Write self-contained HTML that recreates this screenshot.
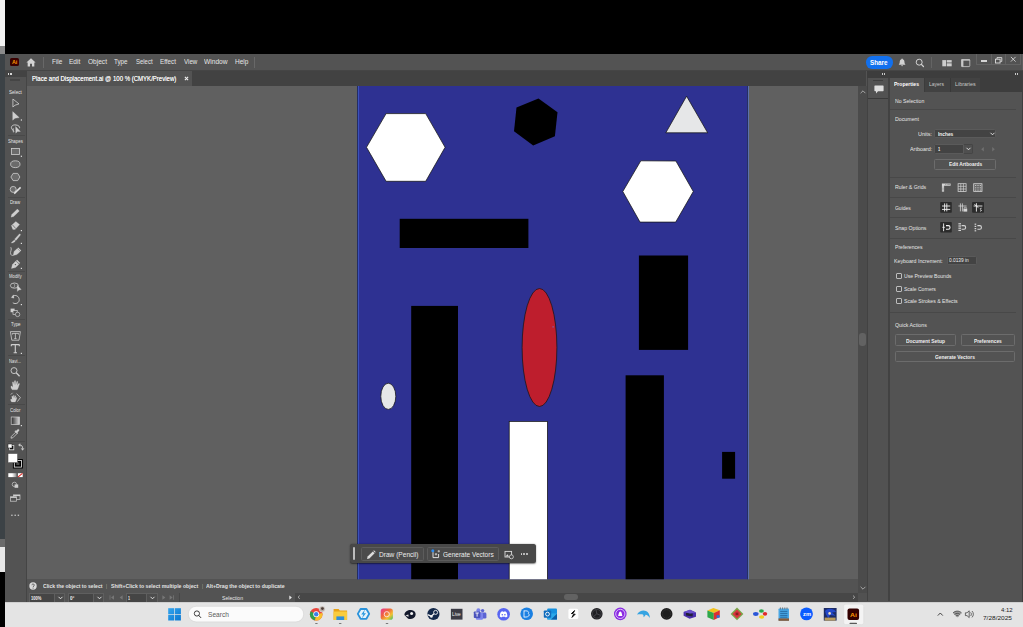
<!DOCTYPE html>
<html><head><meta charset="utf-8"><title>Illustrator</title>
<style>
html,body{margin:0;padding:0;background:#000;}
body{width:1023px;height:627px;overflow:hidden;position:relative;font-family:"Liberation Sans",sans-serif;}
#r{position:absolute;left:0;top:0;width:1023px;height:627px;overflow:hidden;background:#535353;}
#r div{position:absolute;box-sizing:border-box;}
#r span{position:absolute;white-space:nowrap;line-height:1;transform-origin:0 50%;}
#r svg{position:absolute;overflow:visible;}
</style></head><body><div id="r">
<div style="left:5px;top:0px;width:1018px;height:54.3px;background:#000;"></div>
<div style="left:0px;top:0px;width:4.6px;height:46px;background:#f3f3f3;"></div>
<div style="left:0px;top:46px;width:4.6px;height:8px;background:#8a8a8a;"></div>
<div style="left:0px;top:54px;width:4.6px;height:485px;background:#3c4246;"></div>
<div style="left:0px;top:539px;width:5px;height:7.5px;background:#6b6b6b;"></div>
<div style="left:0px;top:546.5px;width:5px;height:25.5px;background:#e8e8e8;"></div>
<div style="left:0px;top:572px;width:5px;height:55px;background:#000;"></div>
<div style="left:5px;top:54.3px;width:1018px;height:15.8px;background:#535353;"></div>
<div style="left:5px;top:70.1px;width:1018px;height:0.8px;background:#454545;"></div>
<div style="left:27px;top:70.8px;width:839px;height:15.4px;background:#424242;"></div>
<div style="left:27.2px;top:70.9px;width:164.6px;height:15.2px;background:#535353;"></div>
<div style="left:27px;top:86px;width:830.5px;height:493.3px;background:#606060;"></div>
<div style="left:4.6px;top:70.8px;width:22.7px;height:531px;background:#454545;"></div>
<div style="left:5.4px;top:70.8px;width:20.2px;height:531px;background:#535353;"></div>
<div style="left:4.6px;top:70.8px;width:22.7px;height:6.6px;background:#434343;"></div>
<div style="left:27.4px;top:579.2px;width:830px;height:14px;background:#535353;"></div>
<div style="left:27.4px;top:593px;width:830px;height:8.5px;background:#535353;"></div>
<div style="left:10px;top:57.8px;width:8.8px;height:8.3px;background:#3a0000;border-radius:1.6px"></div>
<span style="left:11.90px;top:59.78px;font-size:5.4px;font-weight:700;color:#ff9a00;transform:scaleX(1.0000);">Ai</span>
<svg style="left:25.6px;top:58.2px" width="10" height="9" viewBox="0 0 11 10"><path d="M5.5 0.3 L10.6 5 L9.2 5 L9.2 9.4 L6.6 9.4 L6.6 6.3 L4.4 6.3 L4.4 9.4 L1.8 9.4 L1.8 5 L0.4 5 Z" fill="#d4d4d4"/></svg>
<div style="left:43.1px;top:57px;width:0.8px;height:10.6px;background:#686868;"></div>
<div style="left:253.8px;top:57px;width:0.8px;height:10.6px;background:#686868;"></div>
<span style="left:51.70px;top:59.07px;font-size:6.9px;color:#e6e6e6;transform:scaleX(0.9264);">File</span>
<span style="left:69.30px;top:59.07px;font-size:6.9px;color:#e6e6e6;transform:scaleX(0.9504);">Edit</span>
<span style="left:88.00px;top:59.07px;font-size:6.9px;color:#e6e6e6;transform:scaleX(0.9528);">Object</span>
<span style="left:114.40px;top:59.07px;font-size:6.9px;color:#e6e6e6;transform:scaleX(0.9091);">Type</span>
<span style="left:135.80px;top:59.07px;font-size:6.9px;color:#e6e6e6;transform:scaleX(0.8656);">Select</span>
<span style="left:160.00px;top:59.07px;font-size:6.9px;color:#e6e6e6;transform:scaleX(0.9134);">Effect</span>
<span style="left:183.70px;top:59.07px;font-size:6.9px;color:#e6e6e6;transform:scaleX(0.8967);">View</span>
<span style="left:204.40px;top:59.07px;font-size:6.9px;color:#e6e6e6;transform:scaleX(0.9616);">Window</span>
<span style="left:235.40px;top:59.07px;font-size:6.9px;color:#e6e6e6;transform:scaleX(0.9442);">Help</span>
<span style="left:31.70px;top:75.79px;font-size:6.5px;color:#f4f4f4;transform:scaleX(0.9283);text-shadow:0 0 0.3px #f4f4f4;">Place and Displacement.ai @ 100 % (CMYK/Preview)</span>
<svg style="left:184px;top:76.4px" width="5" height="5" viewBox="0 0 5 5"><path d="M0.9 0.9 L4.1 4.1 M4.1 0.9 L0.9 4.1" stroke="#f0f0f0" stroke-width="1.1"/></svg>
<div style="left:8px;top:72.8px;width:1.4px;height:2.4px;background:#d8d8d8;"></div>
<div style="left:10.2px;top:72.8px;width:1.4px;height:2.4px;background:#d8d8d8;"></div>
<div style="left:9.9px;top:79.2px;width:10.2px;height:1.6px;background:#454545;"></div>
<svg style="left:0;top:0" width="1023" height="627" viewBox="0 0 1023 627"><defs><clipPath id="cv"><rect x="27.4" y="86" width="830.2" height="493.3"/></clipPath></defs><g clip-path="url(#cv)"><rect x="357.4" y="86" width="390" height="494" fill="#2e3192"/><rect x="357" y="86" width="0.9" height="494" fill="#1f2756"/><rect x="357.9" y="86" width="1.1" height="494" fill="#3a50bc"/><rect x="747" y="86" width="0.9" height="494" fill="#1c2358"/><rect x="747.9" y="86" width="1" height="494" fill="#5c74b6"/><polygon points="366.5,147.3 386.1,113.6 425.7,113.6 445.1,147.3 425.7,181.3 386.1,181.3" fill="#fff" stroke="#161616" stroke-width="0.75"/><polygon points="538.5,98.4 557.5,112.3 554.9,136.3 533.2,145.5 514,131.3 516.5,107.6" fill="#000"/><polygon points="686.6,96.2 707.7,132.8 665.8,132.8" fill="#e6e7e8" stroke="#161616" stroke-width="0.75"/><polygon points="622.8,191.5 640.8,160.8 675.9,161 693.3,191.5 675.7,222.1 640,222.1" fill="#fff" stroke="#161616" stroke-width="0.75"/><rect x="399.7" y="218.8" width="128.7" height="29.2" fill="#000"/><rect x="638.9" y="255.5" width="49.2" height="94.4" fill="#000"/><rect x="411.2" y="305.9" width="46.8" height="280" fill="#000"/><rect x="625.6" y="375.3" width="38.3" height="210" fill="#000"/><rect x="722.1" y="451.9" width="13" height="26.8" fill="#000"/><rect x="509.2" y="421.4" width="38.2" height="170" fill="#fff" stroke="#161616" stroke-width="0.75"/><ellipse cx="539.5" cy="347.5" rx="17.4" ry="59" fill="#be1e2d" stroke="#161616" stroke-width="0.75"/><rect x="552.6" y="326.4" width="1" height="1" fill="#5b8cff"/><ellipse cx="388.3" cy="396.3" rx="7.5" ry="13.1" fill="#e6e7e8" stroke="#161616" stroke-width="0.75"/></g></svg>
<div style="left:350px;top:544.2px;width:185.6px;height:19.2px;background:#484848;border-radius:2.5px;box-shadow:0 0.5px 1.5px rgba(0,0,0,.5)"></div>
<div style="left:353.2px;top:547.2px;width:1.4px;height:13.2px;background:#bdbdbd;border-radius:1px"></div>
<div style="left:360.6px;top:546.8px;width:63.6px;height:14px;background:#4b4b4b;border:0.8px solid #5c5c5c;border-radius:1.5px"></div>
<div style="left:426.7px;top:546.8px;width:72.7px;height:14px;background:#4b4b4b;border:0.8px solid #5c5c5c;border-radius:1.5px"></div>
<span style="left:379.20px;top:551.54px;font-size:6.6px;color:#ececec;transform:scaleX(0.9973);">Draw (Pencil)</span>
<span style="left:443.30px;top:551.54px;font-size:6.6px;color:#ececec;transform:scaleX(0.9871);">Generate Vectors</span>
<svg style="left:365.5px;top:549.5px" width="10" height="10" viewBox="0 0 10 10"><path d="M1 9 L1.6 6.6 L6.8 1.4 L8.6 3.2 L3.4 8.4 Z" fill="#dcdcdc"/><path d="M7.3 0.9 L7.9 0.3 L9.7 2.1 L9.1 2.7 Z" fill="#dcdcdc"/></svg>
<svg style="left:431px;top:549px" width="10" height="10" viewBox="0 0 10 10"><path d="M2 3.2 L2 8.6 L7.6 8.6 L7.6 5" fill="none" stroke="#dcdcdc" stroke-width="1"/><path d="M5 4 L5 6.4 M3.8 5.2 L6.2 5.2" stroke="#dcdcdc" stroke-width="0.8"/><circle cx="1.8" cy="1.8" r="1.5" fill="#2d8cf0"/><path d="M7.8 1 L7.8 3.4 M6.6 2.2 L9 2.2" stroke="#dcdcdc" stroke-width="0.7"/></svg>
<svg style="left:503.5px;top:549.5px" width="10" height="10" viewBox="0 0 10 10"><rect x="1" y="1.4" width="6.6" height="5.6" fill="none" stroke="#dcdcdc" stroke-width="0.9"/><path d="M1.6 6.4 L3.4 4.2 L5 6.4Z" fill="#dcdcdc"/><circle cx="7.4" cy="6.8" r="2" fill="#484848" stroke="#dcdcdc" stroke-width="0.8"/></svg>
<div style="left:520.6px;top:553.4px;width:1.5px;height:1.5px;background:#dcdcdc;border-radius:1px"></div>
<div style="left:523.3000000000001px;top:553.4px;width:1.5px;height:1.5px;background:#dcdcdc;border-radius:1px"></div>
<div style="left:526.0px;top:553.4px;width:1.5px;height:1.5px;background:#dcdcdc;border-radius:1px"></div>
<span style="left:9.00px;top:90.48px;font-size:5.4px;color:#e4e4e4;transform:scaleX(0.8528);">Select</span>
<span style="left:8.00px;top:138.68px;font-size:5.4px;color:#e4e4e4;transform:scaleX(0.8135);">Shapes</span>
<span style="left:10.30px;top:199.68px;font-size:5.4px;color:#e4e4e4;transform:scaleX(0.8015);">Draw</span>
<span style="left:9.00px;top:274.18px;font-size:5.4px;color:#e4e4e4;transform:scaleX(0.7922);">Modify</span>
<span style="left:10.60px;top:322.48px;font-size:5.4px;color:#e4e4e4;transform:scaleX(0.8200);">Type</span>
<span style="left:9.40px;top:358.68px;font-size:5.4px;color:#e4e4e4;transform:scaleX(0.7841);">Navi...</span>
<span style="left:10.20px;top:407.68px;font-size:5.4px;color:#e4e4e4;transform:scaleX(0.8059);">Color</span>
<div style="left:7.5px;top:134.8px;width:17px;height:0.7px;background:#494949;"></div>
<div style="left:7.5px;top:197.4px;width:17px;height:0.7px;background:#494949;"></div>
<div style="left:7.5px;top:271px;width:17px;height:0.7px;background:#494949;"></div>
<div style="left:7.5px;top:319px;width:17px;height:0.7px;background:#494949;"></div>
<div style="left:7.5px;top:355.3px;width:17px;height:0.7px;background:#494949;"></div>
<div style="left:7.5px;top:404px;width:17px;height:0.7px;background:#494949;"></div>
<div style="left:7.5px;top:441px;width:17px;height:0.7px;background:#494949;"></div>
<svg style="left:0;top:0" width="30" height="627" viewBox="0 0 30 627"><path d="M12.9 99 L12.9 107 L15 105.2 L19 103.9 Z" fill="none" stroke="#cfcfcf" stroke-width="0.8" stroke-linejoin="round"/><path d="M12.7 111.6 L12.7 120.2 L15 118.3 L19.2 117.6 Z" fill="#cfcfcf" stroke="#cfcfcf" stroke-width="0.3" /><rect x="20.799999999999997" y="119.4" width="1.2" height="1.2" fill="#e0e0e0"/><path d="M16 125 C12.5 124.4 10.8 126.6 11.6 128.6 C12.2 130 13.6 130.4 14 131.6 M16 125 C18.6 125.2 20 126.8 19.6 128.2" fill="none" stroke="#cfcfcf" stroke-width="0.9" /><path d="M13.2 128.2 L13.4 132.4" fill="none" stroke="#cfcfcf" stroke-width="0.8" /><path d="M15.6 126.6 L15.8 133.2 L17.4 131.6 L20.4 131.4 Z" fill="#cfcfcf" stroke="#cfcfcf" stroke-width="0.3" /><rect x="11.4" y="148.4" width="8.2" height="6.2" fill="#6b6b6b" stroke="#cfcfcf" stroke-width="0.8"/><rect x="20.799999999999997" y="155.70000000000002" width="1.2" height="1.2" fill="#e0e0e0"/><ellipse cx="15.3" cy="164.2" rx="4.7" ry="3.4" fill="#6b6b6b" stroke="#cfcfcf" stroke-width="0.8"/><path d="M10.9 177 L13.1 173.4 L17.7 173.4 L19.9 177 L17.7 180.6 L13.1 180.6 Z" fill="#6b6b6b" stroke="#cfcfcf" stroke-width="0.8" /><circle cx="13.2" cy="189.4" r="3" fill="#6b6b6b" stroke="#cfcfcf" stroke-width="0.8"/><path d="M14.2 193.6 L20.6 187.4" fill="none" stroke="#e0e0e0" stroke-width="1.5" /><path d="M11 217.2 L11.7 214.6 L17.4 208.9 L19.4 210.9 L13.7 216.6 Z" fill="#cfcfcf" stroke="#cfcfcf" stroke-width="0.2" /><path d="M17.9 208.3 L20 210.4" fill="none" stroke="#535353" stroke-width="0.6" /><path d="M11.3 225.6 L15.8 221.4 L19.6 224.6 L15.2 229.4 L12.8 229.4 Z" fill="#cfcfcf" stroke="#cfcfcf" stroke-width="0.2" /><path d="M12.4 224.8 L15.8 228.6" fill="none" stroke="#535353" stroke-width="0.7" /><rect x="20.799999999999997" y="230.0" width="1.2" height="1.2" fill="#e0e0e0"/><path d="M19.6 233.8 L20.6 234.8 L16 240.4 L14.6 239.2 Z" fill="#cfcfcf" stroke="#cfcfcf" stroke-width="0.3" /><path d="M14.6 239.9 L15.4 240.8 C14.6 242.8 12.6 243 11 243 C12.2 242.2 12.6 240.6 14.6 239.9 Z" fill="#cfcfcf" stroke="#cfcfcf" stroke-width="0.2" /><rect x="20.799999999999997" y="242.8" width="1.2" height="1.2" fill="#e0e0e0"/><path d="M14 251.6 L17.2 248.4 L20.2 251.4 L17 254.6 L13.2 255.6 Z" fill="#cfcfcf" stroke="#cfcfcf" stroke-width="0.2" /><path d="M17.8 247.8 L20.8 250.8" fill="none" stroke="#cfcfcf" stroke-width="1.2" /><path d="M10.8 247.2 C12.4 249.6 9.6 252 10.8 254.4 C11.4 255.6 12.6 255.6 13.4 255.2" fill="none" stroke="#cfcfcf" stroke-width="0.8" /><path d="M12.4 264.6 L15.8 261 L19 264.2 L15.6 267.6 L11.4 268.6 Z" fill="#cfcfcf" stroke="#cfcfcf" stroke-width="0.2" /><path d="M16.6 260.2 L19.8 263.4" fill="none" stroke="#cfcfcf" stroke-width="1.3" /><circle cx="15.4" cy="264.6" r="0.7" fill="#535353"/><rect x="20.799999999999997" y="267.79999999999995" width="1.2" height="1.2" fill="#e0e0e0"/><ellipse cx="14.4" cy="285.6" rx="4" ry="2.6" fill="none" stroke="#cfcfcf" stroke-width="0.8"/><path d="M13.6 283.4 C15 284.4 15 286.6 13.6 287.8" fill="none" stroke="#cfcfcf" stroke-width="0.6" /><path d="M17.2 285.2 L17.4 291.4 L18.9 289.9 L21.2 289.6 Z" fill="#cfcfcf" stroke="#cfcfcf" stroke-width="0.3" /><path d="M12.6 296.2 C15.4 294.4 19 296 19.2 299.6 C19.4 303 15.6 304.6 12.8 302.8" fill="none" stroke="#cfcfcf" stroke-width="0.9" /><path d="M11.2 297.6 L13.6 294.8 L14 298.2 Z" fill="#cfcfcf" stroke="#cfcfcf" stroke-width="0.2" /><rect x="20.799999999999997" y="304.0" width="1.2" height="1.2" fill="#e0e0e0"/><rect x="10.6" y="308.6" width="4" height="3.6" fill="#cfcfcf"/><rect x="13" y="310.6" width="4.2" height="3.8" fill="#535353" stroke="#cfcfcf" stroke-width="0.7"/><circle cx="17.6" cy="314.4" r="2.2" fill="#535353" stroke="#cfcfcf" stroke-width="0.7"/><path d="M10.4 331.6 L20.4 331.6 L19 340.2 L11.8 340.2 Z" fill="none" stroke="#cfcfcf" stroke-width="0.8" stroke-linejoin="round"/><path d="M12.4 333.4 L18.4 333.4 M15.4 333.4 L15.4 338.6 M12.4 333.2 L12.4 334.6 M18.4 333.2 L18.4 334.6 M14.2 338.6 L16.6 338.6" fill="none" stroke="#cfcfcf" stroke-width="0.8" /><path d="M11.2 344.6 L19.4 344.6 M15.3 344.6 L15.3 352.8 M11.3 344.4 L11.3 346.2 M19.3 344.4 L19.3 346.2 M13.6 352.8 L17 352.8" fill="none" stroke="#cfcfcf" stroke-width="1.1" /><rect x="20.799999999999997" y="352.79999999999995" width="1.2" height="1.2" fill="#e0e0e0"/><circle cx="14" cy="370.6" r="3" fill="none" stroke="#cfcfcf" stroke-width="0.9"/><path d="M16.2 372.8 L19.6 376.2" fill="none" stroke="#cfcfcf" stroke-width="1.3" /><path d="M12.2 389.8 C10.8 388 10.6 386.6 11.2 386 C11.8 385.6 12.6 386.6 13 387.2 L12.4 382.4 C12.4 381.6 13.4 381.6 13.6 382.4 L14.2 385 L14.4 381 C14.6 380.2 15.6 380.2 15.6 381 L15.8 385 L16.8 381.6 C17 381 18 381.2 17.8 382 L17.2 385.6 L18.6 383.6 C19 383 19.8 383.6 19.4 384.4 C18.6 386.2 18.4 388 17.2 389.8 Z" fill="#cfcfcf" stroke="#cfcfcf" stroke-width="0.2" /><path d="M11.6 402 C10.6 400.6 10.4 399.6 10.8 399.2 C11.4 398.8 12 399.6 12.2 400 L11.8 396.4 C11.8 395.8 12.6 395.8 12.8 396.4 L13.2 398.2 L13.4 395.6 C13.4 395 14.2 395 14.2 395.6 L14.4 398.2 L15 396 C15.2 395.4 16 395.6 15.8 396.2 L15.4 398.8 L16.2 397.6 C16.6 397.2 17.2 397.6 16.8 398.2 C16.2 399.6 16 400.8 15.2 402 Z" fill="#cfcfcf" stroke="#cfcfcf" stroke-width="0.2" /><path d="M16.6 393.6 L20.4 397.6 L17.4 401.6" fill="none" stroke="#cfcfcf" stroke-width="0.8" /><path d="M10.8 394.6 L12.6 392.8" fill="none" stroke="#cfcfcf" stroke-width="0.8" /><defs><linearGradient id="gg" x1="0" x2="1" y1="0" y2="0"><stop offset="0" stop-color="#2a2a2a"/><stop offset="1" stop-color="#d8d8d8"/></linearGradient><linearGradient id="wg" x1="0" x2="1"><stop offset="0" stop-color="#ffffff"/><stop offset="0.45" stop-color="#ffffff"/><stop offset="1" stop-color="#8a8a8a"/></linearGradient></defs><rect x="11.2" y="417" width="8.2" height="7.6" fill="url(#gg)" stroke="#cfcfcf" stroke-width="0.7"/><rect x="20.799999999999997" y="425.0" width="1.2" height="1.2" fill="#e0e0e0"/><path d="M11 438.2 L11.4 436.4 L15.6 432.2 L17 433.6 L12.8 437.8 Z" fill="none" stroke="#cfcfcf" stroke-width="0.8" /><path d="M16 431 L17.6 429.4 C18.6 428.6 19.8 429.8 19 430.8 L17.4 432.4 L18 433 L17.2 433.8 L14.6 431.2 L15.4 430.4 Z" fill="#cfcfcf" stroke="#cfcfcf" stroke-width="0.2" /><rect x="9.6" y="445.6" width="4.2" height="4.2" fill="#111" stroke="#e8e8e8" stroke-width="0.8"/><rect x="8" y="444" width="4" height="4" fill="#fff" stroke="#222" stroke-width="0.5"/><path d="M19.6 445 C22 445 22.6 446.4 22.6 448.6" fill="none" stroke="#cfcfcf" stroke-width="0.9" /><path d="M18.2 445 L20.2 443.4 L20.2 446.6 Z M22.6 450.4 L21 448.4 L24.2 448.4 Z" fill="#cfcfcf" stroke="#cfcfcf" stroke-width="0.2" /><rect x="12.9" y="459.1" width="10" height="9.4" fill="#000"/><rect x="14.3" y="460.5" width="7.2" height="6.6" fill="none" stroke="#f2f2f2" stroke-width="0.8"/><rect x="15.9" y="462" width="4" height="3.6" fill="#4a4a4a" stroke="#000" stroke-width="0.8"/><rect x="8" y="453.5" width="9.6" height="9.2" fill="#fff" stroke="#3a3a3a" stroke-width="0.5"/><rect x="8.3" y="473.2" width="8.3" height="3.9" fill="url(#wg)"/><rect x="17.9" y="473.2" width="4.8" height="3.9" fill="#fff"/><path d="M18.1 476.9 L22.5 473.4" fill="none" stroke="#e0201c" stroke-width="1.1" /><circle cx="14.4" cy="484.4" r="2.2" fill="none" stroke="#cfcfcf" stroke-width="0.7"/><rect x="14.6" y="484.4" width="3.6" height="3.4" fill="#cfcfcf"/><rect x="13.6" y="494.9" width="6.4" height="4.6" fill="#535353" stroke="#cfcfcf" stroke-width="0.7"/><rect x="13.6" y="494.9" width="6.4" height="1.2" fill="#cfcfcf"/><rect x="10.6" y="496.8" width="6" height="4.4" fill="#535353" stroke="#cfcfcf" stroke-width="0.7"/><rect x="10.6" y="496.8" width="6" height="1.1" fill="#cfcfcf"/><rect x="11.200000000000001" y="514.6" width="1.4" height="1.4" fill="#bdbdbd"/><rect x="14.5" y="514.6" width="1.4" height="1.4" fill="#bdbdbd"/><rect x="17.7" y="514.6" width="1.4" height="1.4" fill="#bdbdbd"/></svg>
<div style="left:866px;top:56.4px;width:26.6px;height:12.2px;background:#1270ee;border-radius:6.2px"></div>
<span style="left:870.40px;top:59.74px;font-size:6.6px;font-weight:700;color:#ffffff;transform:scaleX(0.9594);">Share</span>
<svg style="left:898.4px;top:58.3px" width="8.2" height="9" viewBox="0 0 10 11"><path d="M5 0.6 C5.5 0.6 5.8 1 5.8 1.5 C7.4 2 7.9 3.4 7.9 5 C7.9 6.6 8.4 7.2 9 7.8 L9 8.4 L1 8.4 L1 7.8 C1.6 7.2 2.1 6.6 2.1 5 C2.1 3.4 2.6 2 4.2 1.5 C4.2 1 4.5 0.6 5 0.6 Z" fill="#d2d2d2"/><path d="M3.9 9 L6.1 9 C6.1 10.4 3.9 10.4 3.9 9Z" fill="#d2d2d2"/></svg>
<svg style="left:914.8px;top:57.9px" width="10" height="10" viewBox="0 0 11 11"><circle cx="4.6" cy="4.6" r="3.3" fill="none" stroke="#d2d2d2" stroke-width="1.1"/><path d="M7 7 L9.3 9.3" stroke="#d2d2d2" stroke-width="1.4" stroke-linecap="round"/></svg>
<div style="left:930.9px;top:57.4px;width:0.8px;height:10.4px;background:#646464;"></div>
<svg style="left:941.8px;top:59.6px" width="11" height="7" viewBox="0 0 11 7"><rect x="0.3" y="0.1" width="3.7" height="6.2" fill="#cdcdcd"/><rect x="4.7" y="0.1" width="5" height="2.4" fill="#cdcdcd"/><rect x="4.7" y="3.3" width="5" height="3" fill="#cdcdcd"/></svg>
<svg style="left:960.8px;top:58.8px" width="10" height="9" viewBox="0 0 10 9"><rect x="0.6" y="0.6" width="8.2" height="7" rx="0.8" fill="none" stroke="#c8c8c8" stroke-width="0.8"/><rect x="0.4" y="0.4" width="8.6" height="1.2" fill="#c8c8c8"/><rect x="0.4" y="0.4" width="2" height="7.4" fill="#c8c8c8"/></svg>
<div style="left:976.4px;top:54.3px;width:44.2px;height:10.3px;background:#535353;border:0.7px solid #636363;border-top:none;border-radius:0 0 1.2px 1.2px"></div>
<div style="left:1022.2px;top:54.3px;width:0.8px;height:16px;background:#5e5e5e;"></div>
<div style="left:991.2px;top:54.3px;width:0.7px;height:10.2px;background:#636363;"></div>
<div style="left:1005.3px;top:54.3px;width:0.7px;height:10.2px;background:#636363;"></div>
<div style="left:981px;top:60.4px;width:5.5px;height:1.5px;background:#d4d4d4;"></div>
<svg style="left:994.8px;top:56.8px" width="8" height="7" viewBox="0 0 8 7"><rect x="0.5" y="2.2" width="4.6" height="3.8" fill="none" stroke="#dcdcdc" stroke-width="0.9"/><path d="M2 2 L2 0.6 L6.8 0.6 L6.8 4.4 L5.4 4.4" fill="none" stroke="#dcdcdc" stroke-width="0.9"/></svg>
<svg style="left:1010.3px;top:56.3px" width="7" height="7" viewBox="0 0 7 7"><path d="M0.9 0.9 L5.6 5.6 M5.6 0.9 L0.9 5.6" stroke="#d4d4d4" stroke-width="0.9"/></svg>
<div style="left:857.6px;top:86px;width:9px;height:515.5px;background:#4b4b4b;"></div>
<div style="left:857.6px;top:592.7px;width:9px;height:9px;background:#515151;"></div>
<div style="left:866.6px;top:70.8px;width:156.4px;height:7.4px;background:#3d3d3d;"></div>
<div style="left:866.6px;top:78.2px;width:24px;height:523.3px;background:#424242;"></div>
<div style="left:867.9px;top:78.2px;width:20.4px;height:523.3px;background:#525252;"></div>
<div style="left:867.8px;top:98.2px;width:20.6px;height:0.8px;background:#3a3a3a;"></div>
<div style="left:872.6px;top:80px;width:10.4px;height:0.9px;background:#3e3e3e;"></div>
<div style="left:890px;top:78.2px;width:133px;height:523.3px;background:#535353;"></div>
<div style="left:890px;top:78.2px;width:133px;height:13.4px;background:#3d3d3d;"></div>
<div style="left:890px;top:78.2px;width:34px;height:13.4px;background:#535353;"></div>
<div style="left:924.4px;top:78.2px;width:25.4px;height:13.4px;background:#424242;"></div>
<div style="left:950.4px;top:78.2px;width:29.8px;height:13.4px;background:#424242;"></div>
<div style="left:949.6px;top:78.2px;width:0.8px;height:13.4px;background:#383838;"></div>
<div style="left:923.9px;top:78.2px;width:0.6px;height:13.4px;background:#3c3c3c;"></div>
<div style="left:882px;top:72.9px;width:1px;height:2.1px;background:#c8c8c8;"></div>
<div style="left:884px;top:72.9px;width:1px;height:2.1px;background:#c8c8c8;"></div>
<div style="left:1015px;top:72.9px;width:1.3px;height:2.1px;background:#c8c8c8;"></div>
<div style="left:1017.1px;top:72.9px;width:1.3px;height:2.1px;background:#c8c8c8;"></div>
<div style="left:1022.1px;top:70.8px;width:0.9px;height:530.8px;background:#3e3e3e;"></div>
<svg style="left:873.6px;top:85.3px" width="10" height="9" viewBox="0 0 10 9"><path d="M1 0.4 L9 0.4 C9.4 0.4 9.6 0.6 9.6 1 L9.6 5.6 C9.6 6 9.4 6.2 9 6.2 L4 6.2 L2 8.4 L2 6.2 L1 6.2 C0.6 6.2 0.4 6 0.4 5.6 L0.4 1 C0.4 0.6 0.6 0.4 1 0.4Z" fill="#dedede"/></svg>
<svg style="left:859.8px;top:89.6px" width="6" height="4" viewBox="0 0 6 4"><path d="M0.6 3.2 L3 0.8 L5.4 3.2" fill="none" stroke="#bdbdbd" stroke-width="0.8"/></svg>
<svg style="left:859.6px;top:586.4px" width="6" height="4" viewBox="0 0 6 4"><path d="M0.6 0.8 L3 3.2 L5.4 0.8" fill="none" stroke="#bdbdbd" stroke-width="0.8"/></svg>
<div style="left:859.4px;top:333.2px;width:6.7px;height:12.7px;background:#626262;border-radius:3.2px"></div>
<span style="left:894.30px;top:81.97px;font-size:5.8px;font-weight:700;color:#ffffff;transform:scaleX(0.8714);">Properties</span>
<span style="left:929.10px;top:81.97px;font-size:5.8px;color:#c8c8c8;transform:scaleX(0.8559);">Layers</span>
<span style="left:954.90px;top:81.97px;font-size:5.8px;color:#c8c8c8;transform:scaleX(0.9261);">Libraries</span>
<span style="left:894.60px;top:98.51px;font-size:5.9px;color:#e6e6e6;transform:scaleX(0.8758);">No Selection</span>
<div style="left:890px;top:108.7px;width:126px;height:0.8px;background:#484848;"></div>
<div style="left:890px;top:177.2px;width:126px;height:0.8px;background:#484848;"></div>
<div style="left:890px;top:197px;width:126px;height:0.8px;background:#484848;"></div>
<div style="left:890px;top:217.1px;width:126px;height:0.8px;background:#484848;"></div>
<div style="left:890px;top:237.7px;width:126px;height:0.8px;background:#484848;"></div>
<div style="left:890px;top:312.3px;width:126px;height:0.8px;background:#484848;"></div>
<span style="left:894.60px;top:116.51px;font-size:5.9px;color:#e6e6e6;transform:scaleX(0.8925);">Document</span>
<span style="left:917.80px;top:131.71px;font-size:5.9px;color:#e6e6e6;transform:scaleX(0.9349);">Units:</span>
<div style="left:934.4px;top:128.8px;width:61.8px;height:9.6px;background:#434343;border:0.7px solid #5a5a5a;border-radius:1.2px"></div>
<span style="left:938.30px;top:131.88px;font-size:5.6px;font-weight:700;color:#f2f2f2;transform:scaleX(0.8624);">Inches</span>
<svg style="left:989.6px;top:132px" width="5" height="4" viewBox="0 0 5 4"><path d="M0.5 0.8 L2.5 2.8 L4.5 0.8" fill="none" stroke="#f0f0f0" stroke-width="0.9"/></svg>
<span style="left:909.70px;top:146.61px;font-size:5.9px;color:#e6e6e6;transform:scaleX(0.9147);">Artboard:</span>
<div style="left:934.4px;top:144.1px;width:38.3px;height:9.7px;background:#4f4f4f;border:0.7px solid #454545;border-radius:1.2px"></div>
<div style="left:934.4px;top:144.1px;width:30px;height:9.7px;background:#434343;border:0.7px solid #5a5a5a;border-radius:1.2px 0 0 1.2px"></div>
<span style="left:938.20px;top:146.78px;font-size:5.6px;font-weight:700;color:#f2f2f2;transform:scaleX(0.7064);">1</span>
<svg style="left:966px;top:147.3px" width="5" height="4" viewBox="0 0 5 4"><path d="M0.5 0.8 L2.5 2.8 L4.5 0.8" fill="none" stroke="#f0f0f0" stroke-width="0.9"/></svg>
<svg style="left:981px;top:147px" width="3" height="4.4" viewBox="0 0 3 4.4"><path d="M2.8 0 L0.2 2.2 L2.8 4.4Z" fill="#707070"/></svg>
<svg style="left:992px;top:147px" width="3" height="4.4" viewBox="0 0 3 4.4"><path d="M0.2 0 L2.8 2.2 L0.2 4.4Z" fill="#707070"/></svg>
<div style="left:934.4px;top:159.2px;width:61.4px;height:10.6px;background:#535353;border:0.7px solid #6c6c6c;border-radius:1.4px"></div>
<span style="left:948.50px;top:162.27px;font-size:5.8px;font-weight:700;color:#f0f0f0;transform:scaleX(0.8286);">Edit Artboards</span>
<span style="left:894.60px;top:185.41px;font-size:5.9px;color:#e6e6e6;transform:scaleX(0.8811);">Ruler &amp; Grids</span>
<span style="left:894.60px;top:205.51px;font-size:5.9px;color:#e6e6e6;transform:scaleX(0.8452);">Guides</span>
<span style="left:894.60px;top:225.61px;font-size:5.9px;color:#e6e6e6;transform:scaleX(0.8811);">Snap Options</span>
<span style="left:894.60px;top:244.81px;font-size:5.9px;color:#e6e6e6;transform:scaleX(0.8645);">Preferences</span>
<span style="left:894.00px;top:258.91px;font-size:5.9px;color:#e6e6e6;transform:scaleX(0.8928);">Keyboard Increment:</span>
<div style="left:946.6px;top:255.8px;width:30.8px;height:9.7px;background:#434343;border:0.7px solid #5a5a5a;border-radius:1.2px"></div>
<span style="left:948.90px;top:258.08px;font-size:5.4px;color:#f0f0f0;transform:scaleX(0.8911);">0.0139 in</span>
<div style="left:896.2px;top:272.7px;width:6.3px;height:6.3px;background:#4e4e4e;border:0.6px solid #bcbcbc;border-radius:1px"></div>
<span style="left:904.30px;top:273.57px;font-size:5.8px;color:#e6e6e6;transform:scaleX(0.8786);">Use Preview Bounds</span>
<div style="left:896.2px;top:285.7px;width:6.3px;height:6.3px;background:#4e4e4e;border:0.6px solid #bcbcbc;border-radius:1px"></div>
<span style="left:904.30px;top:286.57px;font-size:5.8px;color:#e6e6e6;transform:scaleX(0.8680);">Scale Corners</span>
<div style="left:896.2px;top:298.2px;width:6.3px;height:6.3px;background:#4e4e4e;border:0.6px solid #bcbcbc;border-radius:1px"></div>
<span style="left:904.30px;top:299.07px;font-size:5.8px;color:#e6e6e6;transform:scaleX(0.8876);">Scale Strokes &amp; Effects</span>
<span style="left:894.60px;top:322.81px;font-size:5.9px;color:#e6e6e6;transform:scaleX(0.8925);">Quick Actions</span>
<div style="left:894.6px;top:334.2px;width:61.4px;height:11.6px;background:#535353;border:0.7px solid #6c6c6c;border-radius:1.4px"></div>
<div style="left:961.3px;top:334.2px;width:53.6px;height:11.6px;background:#535353;border:0.7px solid #6c6c6c;border-radius:1.4px"></div>
<div style="left:894.6px;top:351.2px;width:120.3px;height:10.6px;background:#535353;border:0.7px solid #6c6c6c;border-radius:1.4px"></div>
<span style="left:906.00px;top:338.67px;font-size:5.8px;font-weight:700;color:#f0f0f0;transform:scaleX(0.8442);">Document Setup</span>
<span style="left:974.40px;top:338.67px;font-size:5.8px;font-weight:700;color:#f0f0f0;transform:scaleX(0.8370);">Preferences</span>
<span style="left:934.80px;top:355.07px;font-size:5.8px;font-weight:700;color:#f0f0f0;transform:scaleX(0.8362);">Generate Vectors</span>
<svg style="left:0;top:0" width="1023" height="627" viewBox="0 0 1023 627"><path d="M941.9 183.4 L950.6 183.4 L950.6 185.7 L944.1 185.7 L944.1 191.8 L941.9 191.8 Z" fill="#d4d4d4"/><rect x="945.6" y="183.9" width="0.5" height="1" fill="#535353"/><rect x="942.5" y="186.8" width="1" height="0.5" fill="#535353"/><rect x="946.9" y="183.9" width="0.5" height="1" fill="#535353"/><rect x="942.5" y="188.10000000000002" width="1" height="0.5" fill="#535353"/><rect x="948.2" y="183.9" width="0.5" height="1" fill="#535353"/><rect x="942.5" y="189.4" width="1" height="0.5" fill="#535353"/><rect x="949.5" y="183.9" width="0.5" height="1" fill="#535353"/><rect x="942.5" y="190.70000000000002" width="1" height="0.5" fill="#535353"/><rect x="958.1" y="183.7" width="8" height="7.9" fill="none" stroke="#d4d4d4" stroke-width="0.8"/><path d="M960.8 183.7 V191.6 M963.4 183.7 V191.6 M958.1 186.3 H966.1 M958.1 189 H966.1" stroke="#d4d4d4" stroke-width="0.7" fill="none"/><rect x="973.7" y="183.7" width="8.3" height="7.9" fill="#6a6a6a" stroke="#d4d4d4" stroke-width="0.8"/><rect x="975.2" y="185.0" width="1" height="1" fill="#d4d4d4"/><rect x="975.2" y="187.3" width="1" height="1" fill="#d4d4d4"/><rect x="975.2" y="189.6" width="1" height="1" fill="#d4d4d4"/><rect x="977.5" y="185.0" width="1" height="1" fill="#d4d4d4"/><rect x="977.5" y="187.3" width="1" height="1" fill="#d4d4d4"/><rect x="977.5" y="189.6" width="1" height="1" fill="#d4d4d4"/><rect x="979.8000000000001" y="185.0" width="1" height="1" fill="#d4d4d4"/><rect x="979.8000000000001" y="187.3" width="1" height="1" fill="#d4d4d4"/><rect x="979.8000000000001" y="189.6" width="1" height="1" fill="#d4d4d4"/><rect x="940.2" y="201.9" width="11.6" height="10.9" fill="#2b2b2b" rx="0.8"/><rect x="972.1" y="201.9" width="11.9" height="10.9" fill="#2b2b2b" rx="0.8"/><path d="M944.6 203.4 V211.4 M946.8 203.4 V211.4 M942 206 H950.2 M942 209.4 H950.2" stroke="#f2f2f2" stroke-width="0.9" fill="none"/><path d="M960.4 203.4 V211.4 M962.4 203.4 V211.4 M958.4 206 H966.6" stroke="#d4d4d4" stroke-width="0.8" fill="none"/><rect x="963.4" y="208.6" width="3.8" height="3" fill="#d4d4d4"/><path d="M964.2 208.6 V207.4 H966.4 V208.6" stroke="#d4d4d4" stroke-width="0.6" fill="none"/><path d="M976.4 203.2 V211.6 M973.6 206 H982.4 M974.4 204.4 L978.4 207.6" stroke="#f2f2f2" stroke-width="0.9" fill="none"/><path d="M981.6 208.2 C980.2 207.8 979.8 209.2 980.8 209.6 C981.8 210 981.6 211.4 980 211" stroke="#f2f2f2" stroke-width="0.8" fill="none"/><rect x="940.2" y="222" width="11.6" height="10.6" fill="#2b2b2b" rx="0.8"/><path d="M943.6 223.4 V231.2 M942.4 227.3 H944.8" stroke="#f2f2f2" stroke-width="0.9" fill="none"/><path d="M946 225.6 H948.4 C950.6 225.6 950.6 229.2 948.4 229.2 H946" stroke="#f2f2f2" stroke-width="1.1" fill="none"/><rect x="958.4" y="223.2" width="2.6" height="1.2" fill="#d4d4d4"/><rect x="974.6" y="223.6" width="1.6" height="1.2" fill="#d4d4d4"/><rect x="958.4" y="225.39999999999998" width="2.6" height="1.2" fill="#d4d4d4"/><rect x="974.6" y="225.79999999999998" width="1.6" height="1.2" fill="#d4d4d4"/><rect x="958.4" y="227.6" width="2.6" height="1.2" fill="#d4d4d4"/><rect x="974.6" y="228.0" width="1.6" height="1.2" fill="#d4d4d4"/><rect x="958.4" y="229.79999999999998" width="2.6" height="1.2" fill="#d4d4d4"/><rect x="974.6" y="230.2" width="1.6" height="1.2" fill="#d4d4d4"/><path d="M961.6 225.6 H964 C966.2 225.6 966.2 229.2 964 229.2 H961.6" stroke="#d4d4d4" stroke-width="1.1" fill="none"/><path d="M977.4 225.6 H979.8 C982 225.6 982 229.2 979.8 229.2 H977.4" stroke="#d4d4d4" stroke-width="1.1" fill="none"/></svg>
<svg style="left:29.2px;top:582px" width="8" height="8" viewBox="0 0 8 8"><circle cx="4" cy="4" r="3.7" fill="#d9d9d9"/><path d="M2.9 3.2 C2.9 1.6 5.3 1.6 5.3 3.1 C5.3 4 4.1 4.1 4.1 5.1" fill="none" stroke="#535353" stroke-width="0.9"/><rect x="3.6" y="5.7" width="0.9" height="0.9" fill="#535353"/></svg>
<span style="left:42.80px;top:582.66px;font-size:6px;font-weight:700;color:#e2e2e2;transform:scaleX(0.8443);">Click the object to select</span>
<span style="left:105.90px;top:582.56px;font-size:6px;color:#bdbdbd;transform:scaleX(0.5774);">|</span>
<span style="left:110.60px;top:582.66px;font-size:6px;font-weight:700;color:#e2e2e2;transform:scaleX(0.8608);">Shift+Click to select multiple object</span>
<span style="left:201.70px;top:582.56px;font-size:6px;color:#bdbdbd;transform:scaleX(0.5774);">|</span>
<span style="left:206.40px;top:582.66px;font-size:6px;font-weight:700;color:#e2e2e2;transform:scaleX(0.8684);">Alt+Drag the object to duplicate</span>
<div style="left:29.4px;top:593.2px;width:25.6px;height:8.6px;background:#454545;border:0.6px solid #5f5f5f;border-bottom:none"></div>
<div style="left:55px;top:593.2px;width:10.200000000000003px;height:8.6px;background:#4c4c4c;border:0.6px solid #5f5f5f;border-left:none;border-bottom:none"></div>
<svg style="left:57.7px;top:596.2px" width="5" height="4" viewBox="0 0 5 4"><path d="M0.5 0.8 L2.5 2.8 L4.5 0.8" fill="none" stroke="#ededed" stroke-width="0.9"/></svg>
<div style="left:68px;top:593.2px;width:25.799999999999997px;height:8.6px;background:#454545;border:0.6px solid #5f5f5f;border-bottom:none"></div>
<div style="left:93.8px;top:593.2px;width:10.200000000000003px;height:8.6px;background:#4c4c4c;border:0.6px solid #5f5f5f;border-left:none;border-bottom:none"></div>
<svg style="left:96.5px;top:596.2px" width="5" height="4" viewBox="0 0 5 4"><path d="M0.5 0.8 L2.5 2.8 L4.5 0.8" fill="none" stroke="#ededed" stroke-width="0.9"/></svg>
<div style="left:125.6px;top:593.2px;width:21.599999999999994px;height:8.6px;background:#454545;border:0.6px solid #5f5f5f;border-bottom:none"></div>
<div style="left:147.2px;top:593.2px;width:10.400000000000006px;height:8.6px;background:#4c4c4c;border:0.6px solid #5f5f5f;border-left:none;border-bottom:none"></div>
<svg style="left:150.0px;top:596.2px" width="5" height="4" viewBox="0 0 5 4"><path d="M0.5 0.8 L2.5 2.8 L4.5 0.8" fill="none" stroke="#ededed" stroke-width="0.9"/></svg>
<span style="left:31.40px;top:596.19px;font-size:5.2px;font-weight:700;color:#f0f0f0;transform:scaleX(0.7820);">100%</span>
<span style="left:69.80px;top:596.19px;font-size:5.2px;font-weight:700;color:#f0f0f0;transform:scaleX(0.8850);">0°</span>
<span style="left:127.80px;top:596.19px;font-size:5.2px;font-weight:700;color:#f0f0f0;transform:scaleX(0.6915);">1</span>
<svg style="left:108.6px;top:595.4px" width="60" height="5" viewBox="0 0 60 5"><rect x="0.6" y="0.3" width="0.8" height="4.4" fill="#767676"/><path d="M5 0.3 L2 2.5 L5 4.7Z" fill="#767676"/><path d="M13.6 0.3 L10.6 2.5 L13.6 4.7Z" fill="#767676"/><path d="M53.4 0.3 L56.4 2.5 L53.4 4.7Z" fill="#767676"/></svg>
<svg style="left:168.8px;top:595.4px" width="10" height="5" viewBox="0 0 10 5"><path d="M0.6 0.3 L3.6 2.5 L0.6 4.7Z" fill="#767676"/><rect x="4.2" y="0.3" width="0.8" height="4.4" fill="#767676"/></svg>
<div style="left:179.4px;top:593.4px;width:0.7px;height:8.2px;background:#474747;"></div>
<span style="left:221.70px;top:596.08px;font-size:5.4px;color:#e6e6e6;transform:scaleX(0.9498);">Selection</span>
<svg style="left:288.6px;top:595.4px" width="3.4" height="5.2" viewBox="0 0 4 6"><path d="M0.4 0.4 L3.4 3 L0.4 5.6Z" fill="#e6e6e6"/></svg>
<div style="left:294.6px;top:592.7px;width:563px;height:9px;background:#474747;"></div>
<svg style="left:297.4px;top:595px" width="4" height="5" viewBox="0 0 4 5"><path d="M2.8 0.6 L1 2.2 L2.8 3.8" fill="none" stroke="#bdbdbd" stroke-width="0.8"/></svg>
<svg style="left:851.8px;top:595px" width="4" height="5" viewBox="0 0 4 5"><path d="M1 0.6 L2.8 2.2 L1 3.8" fill="none" stroke="#bdbdbd" stroke-width="0.8"/></svg>
<div style="left:564.4px;top:593.6px;width:13.6px;height:6.8px;background:#626262;border-radius:3.4px"></div>
<div style="left:5px;top:601.6px;width:1018px;height:25.4px;background:#e4e4e4;"></div>
<div style="left:5px;top:601.6px;width:1018px;height:0.6px;background:#d0d0d0;"></div>
<svg style="left:0;top:0" width="1023" height="627" viewBox="0 0 1023 627"><defs><linearGradient id="wl" gradientUnits="userSpaceOnUse" x1="168" y1="608" x2="181" y2="621"><stop offset="0" stop-color="#35a6ee"/><stop offset="1" stop-color="#0a76d0"/></linearGradient></defs><rect x="168.2" y="608.2" width="6" height="5.8" fill="url(#wl)"/><rect x="174.9" y="608.2" width="6" height="5.8" fill="url(#wl)"/><rect x="168.2" y="614.7" width="6" height="5.8" fill="url(#wl)"/><rect x="174.9" y="614.7" width="6" height="5.8" fill="url(#wl)"/><rect x="188.3" y="606.3" width="115.4" height="15.6" rx="7.8" fill="#fbfbfb" stroke="#d2d2d2" stroke-width="0.6"/><circle cx="196.9" cy="613.5" r="2.6" fill="none" stroke="#2a2a2a" stroke-width="0.9"/><path d="M198.8 615.5 L200.8 617.6" stroke="#2a2a2a" stroke-width="1" stroke-linecap="round"/><circle cx="316.2" cy="614.2" r="6.3" fill="#e8453c"/><path d="M316.2 614.2 L310.6 611.2 A6.3 6.3 0 0 0 315 620.4 Z" fill="#2fa04e"/><path d="M316.2 614.2 L315 620.4 A6.3 6.3 0 0 0 322.4 613 Z" fill="#f7c12f"/><circle cx="316.2" cy="614.2" r="2.9" fill="#fff"/><circle cx="316.2" cy="614.2" r="2.2" fill="#3f7fe8"/><circle cx="322.2" cy="609" r="3" fill="#b8aca4" stroke="#e8e8e8" stroke-width="0.6"/><circle cx="322.4" cy="608.6" r="1.4" fill="#4a3c36"/><path d="M333.6 609 L338.6 609 L339.8 610.4 L347.1 610.4 L347.1 620 L333.6 620 Z" fill="#e8a317"/><rect x="333.6" y="611.6" width="13.5" height="8.4" rx="0.8" fill="#f9cc3d"/><rect x="336.4" y="616.4" width="7.8" height="3.6" fill="#2f8fd8"/><path d="M357.8 613.9 L360.6 609 L366.4 609 L369.2 613.9 L366.4 618.8 L360.6 618.8 Z" fill="#e6f3fb" stroke="#2a93db" stroke-width="1.8" stroke-linejoin="round"/><path d="M365 609.6 L361.2 614.6 L363.4 614.6 L361.8 618.6 L366 613.2 L363.8 613.2 Z" fill="#2a9adf"/><defs><linearGradient id="rb" x1="0" y1="0" x2="1" y2="1"><stop offset="0" stop-color="#e8389a"/><stop offset="0.4" stop-color="#f0643c"/><stop offset="0.7" stop-color="#f4c030"/><stop offset="1" stop-color="#38c26a"/></linearGradient></defs><rect x="380.7" y="608.4" width="12.2" height="11.4" rx="2.6" fill="url(#rb)"/><circle cx="386.8" cy="614.2" r="2.6" fill="none" stroke="#fde4ee" stroke-width="0.9"/><path d="M404.4 615 C404.6 611.4 408 609.8 411 610 C414 610.2 416 612.2 415.6 615 C415.2 617.8 412 619.4 409.4 619 C407.6 618.8 406.8 617.4 404.4 615 Z" fill="#141a2c"/><circle cx="411.6" cy="613.6" r="1.5" fill="#f2f2f2"/><path d="M405.4 615.4 L408.4 614.6 L408.6 616.8Z" fill="#e8e8e8"/><circle cx="433.4" cy="614" r="6.1" fill="#14294a"/><circle cx="435.6" cy="612.4" r="2" fill="none" stroke="#f2f2f2" stroke-width="0.9"/><path d="M427.6 614.6 L431.2 616.2 L434 613.8" stroke="#f2f2f2" stroke-width="1.3" fill="none"/><circle cx="431.4" cy="616.4" r="1.3" fill="#f2f2f2"/><rect x="450.9" y="608.8" width="11.6" height="10.8" fill="#3b3b45"/><circle cx="482.6" cy="610.6" r="1.7" fill="#5b63d3"/><circle cx="478.4" cy="610.2" r="2" fill="#7b83eb"/><rect x="480.6" y="612.6" width="5.8" height="6" rx="1.4" fill="#5b63d3"/><rect x="475.8" y="612.4" width="7.2" height="7.4" rx="1.2" fill="#7b83eb"/><rect x="473.8" y="611.4" width="6.6" height="6.6" rx="0.8" fill="#4b53bc"/><path d="M475.4 613 H478.8 M477.1 613 V616.6" stroke="#fff" stroke-width="0.9"/><circle cx="503.6" cy="614.2" r="6.3" fill="#5865f2"/><path d="M499.8 616.6 C499.8 613.8 500.6 612.4 501.2 611.8 C502 611.4 502.6 611.3 502.6 611.3 L502.9 611.8 H504.3 L504.6 611.3 C504.6 611.3 505.2 611.4 506 611.8 C506.6 612.4 507.4 613.8 507.4 616.6 C506.6 617.2 505.8 617.4 505.6 617.4 L505.1 616.7 H502.1 L501.6 617.4 C501.4 617.4 500.6 617.2 499.8 616.6 Z" fill="#fff"/><circle cx="502.3" cy="614.7" r="0.8" fill="#5865f2"/><circle cx="504.9" cy="614.7" r="0.8" fill="#5865f2"/><circle cx="526.7" cy="613.8" r="6.3" fill="#1a80e2"/><path d="M524 610.4 L524 617.4 M524 611 C527.6 610.2 529.4 612 528.4 613.6 C530.6 615.4 528 617.6 524 617" fill="none" stroke="#e8f2ff" stroke-width="0.9"/><rect x="547.2" y="608.4" width="9.8" height="11" rx="1" fill="#1490df"/><path d="M547.2 613.4 L557 613.4 L557 619.4 L547.2 619.4Z" fill="#28a8ea"/><path d="M551 619.4 L557 613.8 L557 619.4Z" fill="#0a5ea8"/><rect x="543.8" y="610.4" width="7.4" height="7.4" rx="0.8" fill="#0f6cbd"/><circle cx="547.5" cy="614.1" r="1.9" fill="none" stroke="#fff" stroke-width="0.9"/><rect x="568.4" y="608.8" width="9.9" height="10.2" rx="1.6" fill="#fff"/><path d="M574.6 610.6 L571.4 613.6 L573 613.6 Z M572 617.4 L575.2 614.2 L573.6 614.2 Z" fill="#111" stroke="#111" stroke-width="1"/><circle cx="596.8" cy="613.8" r="5.8" fill="#1f1f22"/><circle cx="596.8" cy="613.8" r="4.4" fill="none" stroke="#4a4a50" stroke-width="0.7"/><path d="M596.8 613.8 L596 609.6 M596.8 613.8 L600.6 615.4 M596.8 613.8 L593.6 616.6" stroke="#4a4a50" stroke-width="0.9"/><circle cx="620.3" cy="613.9" r="6.3" fill="#8a2be2"/><circle cx="620.3" cy="613.9" r="4.6" fill="none" stroke="#ece0ff" stroke-width="0.8"/><path d="M618 616 C618.8 615 618.4 612 620.3 611.4 C622.2 612 621.8 615 622.6 616 Z" fill="#fff"/><path d="M637 614.6 C639 611 643 609.6 646 611 C648.4 612 649.6 614.6 650 618 C648.6 616 647.2 615 645.6 614.8 C645.2 616 644.4 616.8 643.4 617.2 C643.8 616.2 643.6 615.2 643 614.4 C641 614 639 614.2 637 614.6 Z" fill="#36a4e2"/><circle cx="666.6" cy="613.9" r="5.9" fill="#1e1e1e"/><circle cx="666.6" cy="613.9" r="4.2" fill="none" stroke="#3c3c3c" stroke-width="0.8" stroke-dasharray="1.2 0.8"/><path d="M683.6 612 L690 609.8 L696 612.4 L696 616.8 L689.6 618.8 L683.6 615.8 Z" fill="#4b30ac"/><path d="M686 612.8 L692.8 613.6 L692.6 616.6 L686 615.4 Z" fill="#20203a"/><path d="M683.6 612 L690 609.8 L696 612.4 L690 613.4Z" fill="#6a52cc"/><path d="M707.4 610.6 L713.4 608 L719.8 610.2 L713.8 613 Z" fill="#f2c11c"/><path d="M707.4 610.6 L713.8 613 L713.8 620 L707.4 617.2 Z" fill="#2fa84a"/><path d="M713.8 613 L719.8 610.2 L719.8 617 L713.8 620 Z" fill="#dc3030"/><rect x="716.6" y="615.2" width="3" height="2.6" fill="#2a6fe0"/><path d="M737 607.6 L743.4 613.9 L737 620.2 L730.6 613.9 Z" fill="#7aa84a"/><path d="M737 609.4 L741.6 613.9 L737 618.4 L732.4 613.9 Z" fill="#d8363e"/><rect x="735.6" y="612.6" width="2.8" height="2.6" fill="#8a1c22"/><ellipse cx="755.8" cy="614" rx="2.8" ry="1.9" fill="#2a56d8"/><ellipse cx="761.4" cy="611" rx="2.4" ry="1.8" fill="#28a84a"/><ellipse cx="765" cy="613.8" rx="2.2" ry="1.9" fill="#e02a2a"/><ellipse cx="761.6" cy="617" rx="2.6" ry="1.7" fill="#f0d020"/><rect x="778.5" y="608.4" width="10.5" height="12.4" rx="0.8" fill="#48a6e4"/><rect x="778.5" y="618.4" width="10.5" height="2.4" fill="#8a5a36"/><path d="M780.2 611.4 H787.4 M780.2 613.4 H787.4 M780.2 615.4 H787.4 M780.2 617.2 H787.4" stroke="#1f5f94" stroke-width="0.8"/><path d="M780.4 607.4 V609.4 M782.6 607.4 V609.4 M784.8 607.4 V609.4 M787 607.4 V609.4" stroke="#555" stroke-width="0.7"/><circle cx="806.5" cy="613.9" r="6.4" fill="#0b5cff"/><rect x="823.8" y="608" width="12.8" height="12.6" fill="#1c2c66"/><path d="M825 611 C828 607.6 834 608.4 836 612 L832 612.6 L835.6 615.8 L830 615 L828.6 618.4 L826 614.4 Z" fill="#2448c8"/><rect x="824.6" y="617.6" width="11" height="3" fill="#b89a5a"/><circle cx="829.6" cy="613.4" r="1.3" fill="#f0e0c0"/><rect x="843.7" y="604.2" width="20" height="20.4" rx="2" fill="#f4f4f4" stroke="#dadada" stroke-width="0.5"/><rect x="847.5" y="608.5" width="11.6" height="11.4" rx="2" fill="#330000"/><rect x="315.09999999999997" y="623" width="2.6" height="1.1" rx="0.5" fill="#7a7a7a"/><rect x="338.9" y="623" width="2.6" height="1.1" rx="0.5" fill="#7a7a7a"/><rect x="385.7" y="623" width="2.6" height="1.1" rx="0.5" fill="#7a7a7a"/><rect x="849.5" y="622.8" width="7.5" height="1.3" rx="0.6" fill="#5a5a5a"/><path d="M937.8 615.6 L940.3 613 L942.8 615.6" fill="none" stroke="#333" stroke-width="0.9"/><path d="M957.3 617.4 L953 612.9 C955.4 610.5 959.2 610.5 961.6 612.9 Z" fill="#9a9a9a"/><path d="M953 612.9 C955.4 610.5 959.2 610.5 961.6 612.9 M954.5 614.5 C956 613 958.6 613 960.1 614.5 M955.9 616 C956.7 615.3 957.9 615.3 958.7 616" fill="none" stroke="#3a3a3a" stroke-width="0.7"/><path d="M965.4 612.8 H967 L969.2 610.8 V617.6 L967 615.6 H965.4 Z" fill="none" stroke="#333" stroke-width="0.7"/><path d="M970.6 612.4 C971.6 613.4 971.6 615 970.6 616 M972 611 C973.8 612.8 973.8 615.6 972 617.4" fill="none" stroke="#333" stroke-width="0.7"/></svg>
<span style="left:207.50px;top:612.23px;font-size:6.8px;color:#5a5a5a;transform:scaleX(0.9700);">Search</span>
<span style="left:452.30px;top:612.72px;font-size:4.6px;color:#f0f0f0;transform:scaleX(1.0428);">Live</span>
<span style="left:802.60px;top:611.67px;font-size:5.8px;font-weight:700;color:#fff;transform:scaleX(0.9929);">zm</span>
<span style="left:850.00px;top:611.75px;font-size:6.2px;font-weight:700;color:#ff9a00;transform:scaleX(1.0968);">Ai</span>
<span style="left:1000.50px;top:607.97px;font-size:5.8px;color:#222;transform:scaleX(1.0276);">4:12</span>
<span style="left:983.10px;top:615.97px;font-size:5.8px;color:#222;transform:scaleX(1.1239);">7/28/2025</span>
</div></body></html>
